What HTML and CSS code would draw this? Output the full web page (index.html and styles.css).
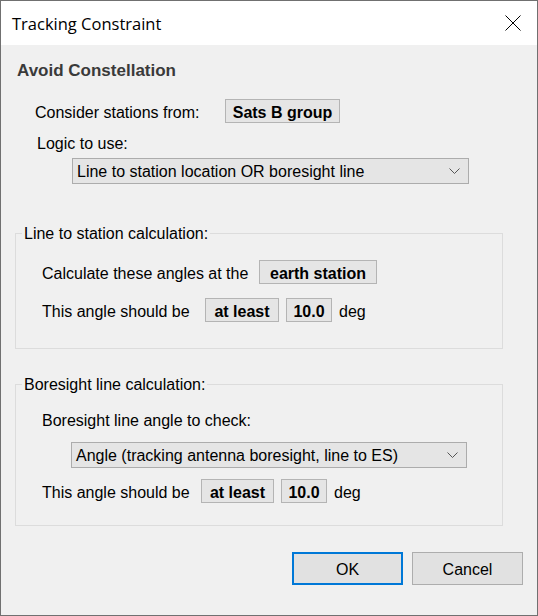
FILE: index.html
```html
<!DOCTYPE html>
<html>
<head>
<meta charset="utf-8">
<title>Tracking Constraint</title>
<link rel="stylesheet" href="styles.css">
</head>
<body>
<div class="window">
  <div class="titlebar">
    <span class="title">Tracking Constraint</span>
    <svg class="close" width="16" height="16" viewBox="0 0 16 16"><path d="M0.5 0.5 L15.5 15.5 M15.5 0.5 L0.5 15.5" stroke="#000" stroke-width="1" fill="none"/></svg>
  </div>
  <div class="content">
    <div class="heading">Avoid Constellation</div>
    <div class="row row-consider">
      <span class="label label-consider">Consider stations from:</span>
      <span class="val w-sats">Sats B group</span>
    </div>
    <div class="label label-logic">Logic to use:</div>
    <div class="combo combo-logic">
      <span class="combo-text">Line to station location OR boresight line</span>
      <svg class="chev" width="11" height="6" viewBox="0 0 11 6"><path d="M0.5 0.5 L5.5 5.5 L10.5 0.5" stroke="#555" stroke-width="1" fill="none"/></svg>
    </div>

    <fieldset class="group group-line">
      <legend>Line to station calculation:</legend>
      <div class="row row-calc">
        <span class="label label-calc">Calculate these angles at the</span>
        <span class="val w-earth">earth station</span>
      </div>
      <div class="row row-angle1">
        <span class="label label-angle1">This angle should be</span>
        <span class="val w-least">at least</span>
        <span class="val w-num">10.0</span>
        <span class="unit">deg</span>
      </div>
    </fieldset>

    <fieldset class="group group-bore">
      <legend>Boresight line calculation:</legend>
      <div class="label label-bore">Boresight line angle to check:</div>
      <div class="combo combo-bore">
        <span class="combo-text">Angle (tracking antenna boresight, line to ES)</span>
        <svg class="chev" width="11" height="6" viewBox="0 0 11 6"><path d="M0.5 0.5 L5.5 5.5 L10.5 0.5" stroke="#555" stroke-width="1" fill="none"/></svg>
      </div>
      <div class="row row-angle2">
        <span class="label label-angle2">This angle should be</span>
        <span class="val w-least2">at least</span>
        <span class="val w-num">10.0</span>
        <span class="unit">deg</span>
      </div>
    </fieldset>

    <div class="buttons">
      <button class="btn btn-ok">OK</button>
      <button class="btn btn-cancel">Cancel</button>
    </div>
  </div>
</div>
</body>
</html>
```
FILE: styles.css
```css
html, body {
  margin: 0;
  padding: 0;
  background: #f0f0f0;
}
body {
  font-family: "Liberation Sans", Arial, sans-serif;
  font-size: 16px;
  color: #000;
}
.window {
  width: 538px;
  height: 616px;
  box-sizing: border-box;
  border: 1px solid #707070;
  background: #f0f0f0;
  display: flex;
  flex-direction: column;
}
.titlebar {
  height: 44px;
  background: #fff;
  display: flex;
  align-items: center;
  padding-left: 11px;
  padding-right: 16px;
  flex-shrink: 0;
}
.title {
  font-family: "Open Sans", "Liberation Sans", sans-serif;
  font-size: 16.5px;
  color: #000;
  flex: 1;
  padding-top: 1px;
}
.close {
  display: block;
}
.content {
  padding: 16px 14px 0 14px;
  display: flex;
  flex-direction: column;
  align-items: flex-start;
}
.heading {
  font-size: 17px;
  font-weight: bold;
  line-height: 20px;
  color: #3a3a3a;
  margin-left: 2px;
}
.label {
  line-height: 20px;
  display: inline-block;
}
.row {
  display: flex;
  align-items: baseline;
}
.val {
  display: inline-block;
  box-sizing: border-box;
  border: 1px solid #b4b4b4;
  background: #e5e5e5;
  font-weight: bold;
  line-height: 17px;
  padding: 4px 0 1px;
  height: 24px;
  text-align: center;
}
.row-consider {
  margin-top: 18px;
  margin-left: 20px;
}
.label-consider { width: 190px; }
.w-sats { width: 115px; }
.label-logic {
  margin-top: 11px;
  margin-left: 22px;
}
.combo {
  box-sizing: border-box;
  height: 26px;
  border: 1px solid #acacac;
  background: #e5e5e5;
  display: flex;
  align-items: center;
  padding-left: 4px;
  padding-right: 8px;
}
.combo-text {
  flex: 1;
  line-height: 22px;
  padding-top: 2px;
  white-space: nowrap;
}
.chev { display: block; }
.combo-logic {
  margin-top: 4px;
  margin-left: 57px;
  width: 397px;
}
.group {
  margin: 0;
  width: 488px;
  box-sizing: border-box;
  border: 1px solid #dcdcdc;
  padding: 0 6px;
  min-inline-size: 0;
}
.group legend {
  padding: 2px 2px 0;
  line-height: 18px;
  font-size: 16px;
}
.group-line {
  margin-top: 39px;
  padding-bottom: 26px;
}
.group-bore {
  margin-top: 25px;
  padding-bottom: 22px;
}
.row-calc {
  margin-top: 17px;
  margin-left: 20px;
}
.label-calc { width: 217px; }
.w-earth { width: 118px; }
.row-angle1 {
  margin-top: 14px;
  margin-left: 20px;
}
.label-angle1 { width: 163px; }
.w-least { width: 74px; }
.w-least2 { width: 73px; }
.w-num {
  width: 46px;
  margin-left: 7px;
}
.unit {
  margin-left: 7px;
  line-height: 20px;
}
.label-bore {
  display: block;
  margin-top: 17px;
  margin-left: 20px;
}
.combo-bore {
  margin-top: 11px;
  margin-left: 49px;
  width: 396px;
}
.row-angle2 {
  margin-top: 11px;
  margin-left: 20px;
}
.label-angle2 { width: 159px; }
.buttons {
  align-self: stretch;
  display: flex;
  justify-content: flex-end;
  gap: 9px;
  margin-top: 26px;
}
.btn {
  width: 111px;
  height: 33px;
  box-sizing: border-box;
  background: #e1e1e1;
  font-family: "Liberation Sans", Arial, sans-serif;
  font-size: 16px;
  color: #000;
  padding: 2px 0 0;
  margin: 0;
}
.btn-ok {
  border: 2px solid #0078d7;
}
.btn-cancel {
  border: 1px solid #adadad;
}
```
